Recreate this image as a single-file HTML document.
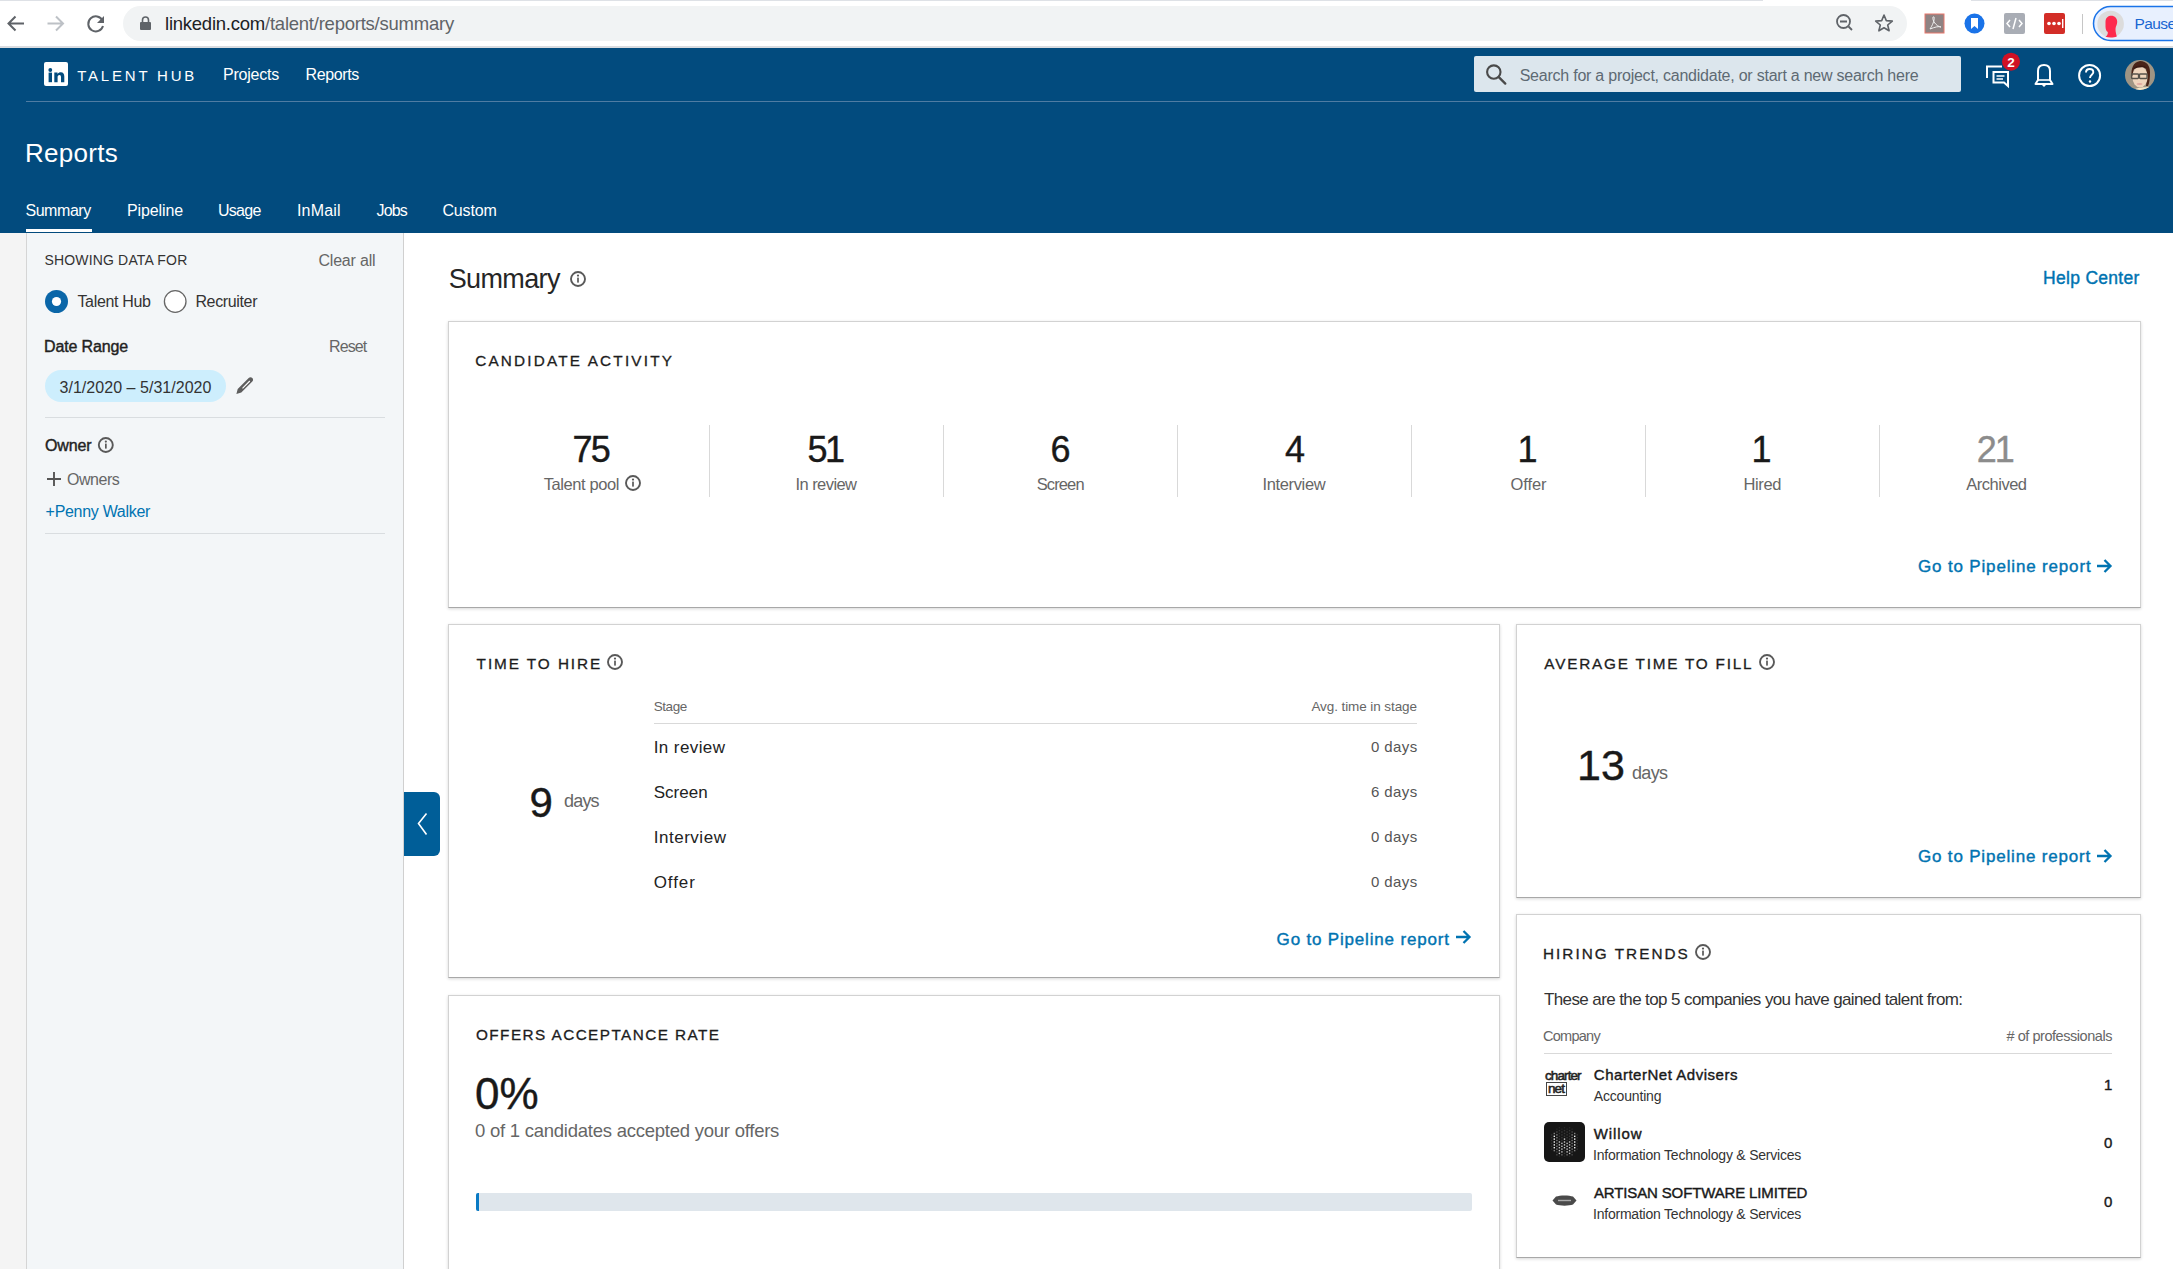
<!DOCTYPE html>
<html><head><meta charset="utf-8">
<style>
*{box-sizing:border-box;margin:0;padding:0}
html,body{width:2173px;height:1269px;overflow:hidden;background:#fff;font-family:"Liberation Sans",sans-serif}
.abs{position:absolute}
.tx{position:absolute;white-space:nowrap;line-height:1;font-family:"Liberation Sans",sans-serif}
.card{position:absolute;background:#fff;border:1px solid #d2d2d2;border-bottom-color:#a8a8a8;box-shadow:0 1px 3px rgba(0,0,0,.16)}
</style></head><body>
<!-- chrome bar -->
<div class="abs" style="left:0;top:0;width:2173px;height:47px;background:#fff"></div>
<div class="abs" style="left:0;top:0;width:1763px;height:1px;background:#dee1e6"></div>
<div class="abs" style="left:1971px;top:0;width:202px;height:1px;background:#dee1e6"></div>
<div class="abs" style="left:0;top:46px;width:2173px;height:2px;background:#dadce0"></div>
<div class="abs" style="left:123px;top:6px;width:1784px;height:35px;border-radius:18px;background:#f1f3f4"></div>
<svg class="abs" style="left:0;top:0" width="200" height="47">
  <path d="M24 23.5H9M15.5 16.5L8.5 23.5L15.5 30.5" stroke="#5f6368" stroke-width="2" fill="none"/>
  <path d="M47.5 23.5H62.5M56 16.5L63 23.5L56 30.5" stroke="#bdc1c6" stroke-width="2" fill="none"/>
  <path d="M102.5 20.5A7.5 7.5 0 1 0 103 26" stroke="#5f6368" stroke-width="2" fill="none"/>
  <path d="M104 16V23H97Z" fill="#5f6368"/>
  <rect x="140" y="22" width="11" height="8" rx="1" fill="#5f6368"/>
  <path d="M142.5 22V20A3 3 0 0 1 148.5 20V22" stroke="#5f6368" stroke-width="1.6" fill="none"/>
</svg>
<svg class="abs" style="left:1820px;top:0" width="353" height="47">
  <circle cx="23.5" cy="21.5" r="6.5" stroke="#5f6368" stroke-width="1.8" fill="none"/>
  <path d="M20 21.5H27M28.5 26.5L32 30" stroke="#5f6368" stroke-width="1.8" fill="none"/>
  <path d="M64 15L66.3 20.6L72.3 21.1L67.7 25L69.1 30.8L64 27.7L58.9 30.8L60.3 25L55.7 21.1L61.7 20.6Z" stroke="#5f6368" stroke-width="1.6" fill="none" stroke-linejoin="round"/>
  <rect x="105" y="14" width="19" height="19" fill="#8e8383" stroke="#e8776b" stroke-width="1"/>
  <path d="M110 29C112 26 115 20 114 17C113 16 112 18 114 22C116 25 119 27 121 27C119 26 115 27 110 29Z" stroke="#eee" stroke-width="1" fill="none"/>
  <circle cx="154.5" cy="23.5" r="10" fill="#1a73e8"/>
  <path d="M151 18H158V29L154.5 26L151 29Z" fill="#fff"/>
  <rect x="184" y="13" width="21" height="21" rx="2" fill="#a9adb5"/>
  <path d="M190 20L187 23.5L190 27M199 20L202 23.5L199 27M196 18L193 29" stroke="#fff" stroke-width="1.5" fill="none"/>
  <rect x="224" y="13" width="21" height="21" rx="2" fill="#d32d27"/>
  <circle cx="229" cy="23.5" r="1.8" fill="#fff"/><circle cx="234" cy="23.5" r="1.8" fill="#fff"/><circle cx="239" cy="23.5" r="1.8" fill="#fff"/>
  <rect x="242" y="19" width="1.4" height="9" fill="#fff"/>
  <rect x="262" y="14" width="1" height="20" fill="#c6c6c6"/>
  <rect x="273.5" y="6.5" width="140" height="34" rx="17" fill="#e8f0fe" stroke="#1a73e8" stroke-width="1.5"/>
  <circle cx="290.6" cy="24" r="13.3" fill="#dcdcdc"/>
  <path d="M285.5 22C285.5 17.5 288.5 15.8 291.2 15.8C294.8 15.8 297.3 18.5 297.2 22C297.1 24.5 296 26 295.6 28C295.3 30 295.8 33 296.8 36.5C294 37.8 289 38 285.5 36.8C287.5 35.5 288 33.5 287.8 32C286.3 31.3 285.5 29 285.5 26.5Z" fill="#fe2a4d"/>
</svg>

<!-- header -->
<div class="abs" style="left:0;top:48px;width:2173px;height:185px;background:#024b7e"></div>
<div class="abs" style="left:26px;top:101px;width:2147px;height:1px;background:#4f7ca3"></div>
<div class="abs" style="left:44px;top:62px;width:24px;height:24px;border-radius:2px;background:#fff"></div>
<svg class="abs" style="left:44px;top:62px" width="24" height="24">
  <circle cx="6.3" cy="8" r="1.9" fill="#024b7e"/>
  <rect x="4.6" y="10.6" width="3.4" height="9.6" fill="#024b7e"/>
  <path d="M10.3 10.6H13.5V12C14.2 10.9 15.4 10.3 16.9 10.3C19.3 10.3 20.3 11.9 20.3 14.6V20.2H17V15.2C17 13.8 16.5 13.1 15.4 13.1C14.2 13.1 13.6 14 13.6 15.4V20.2H10.3Z" fill="#024b7e"/>
</svg>
<div class="abs" style="left:1474px;top:56px;width:487px;height:36px;border-radius:2px;background:#dce6ed"></div>
<svg class="abs" style="left:1480px;top:58px" width="32" height="32">
  <circle cx="13.8" cy="14.1" r="6.7" stroke="#4a4a4a" stroke-width="2.1" fill="none"/>
  <path d="M18.8 19.1L25.3 25.6" stroke="#4a4a4a" stroke-width="2.3" stroke-linecap="round"/>
</svg>
<svg class="abs" style="left:1980px;top:50px" width="190" height="45">
  <!-- messages -->
  <path d="M7 28V16.5H22" stroke="#fff" stroke-width="2" fill="none"/>
  <path d="M13.5 22H28V36L24 32.5H13.5Z" stroke="#fff" stroke-width="2" fill="none" stroke-linejoin="miter"/>
  <path d="M16.5 26H24.5M16.5 29H23" stroke="#fff" stroke-width="1.3"/>
  <circle cx="31" cy="11.7" r="9" fill="#d11124"/>
  <text x="31" y="16.8" text-anchor="middle" font-family="Liberation Sans" font-weight="700" font-size="13.5" fill="#fff">2</text>
  <!-- bell -->
  <path d="M55.5 34H72.5L70 30V21C70 17 67.5 15 64 15C60.5 15 58 17 58 21V30Z" stroke="#fff" stroke-width="2" fill="none" stroke-linejoin="round"/>
  <path d="M58 30H70" stroke="#fff" stroke-width="1.6"/>
  <path d="M62 35H66L64 37Z" fill="#fff"/>
  <!-- help -->
  <circle cx="109.6" cy="25.5" r="10.5" stroke="#fff" stroke-width="2" fill="none"/>
  <path d="M106 22.5C106 20.3 107.7 19 109.7 19C111.7 19 113.3 20.3 113.3 22.2C113.3 24.6 110 25 110 28" stroke="#fff" stroke-width="1.9" fill="none"/>
  <circle cx="110" cy="31.5" r="1.2" fill="#fff"/>
  <!-- avatar -->
  <defs><clipPath id="av"><circle cx="160" cy="25" r="15"/></clipPath></defs>
  <g clip-path="url(#av)">
    <rect x="144" y="9" width="32" height="32" fill="#9f9584"/>
    <path d="M151.5 26C151 19 153 12 160 11C167 11 170 16 170 22C170 28 169.5 33 168 36L166 36C167 30 167.5 24 166 19C162 16 157 16 154 19C153 21 153 24 152.8 26Z" fill="#4a2418"/>
    <ellipse cx="160" cy="27" rx="7.6" ry="10.5" fill="#eed5bd"/>
    <path d="M153.5 18C156 15 164 14.5 167 18C164 16.8 157 16.8 153.5 19.5Z" fill="#3a1a12"/>
    <rect x="151.5" y="24" width="7" height="4.5" rx="0.8" fill="none" stroke="#55524a" stroke-width="1.3"/>
    <rect x="159.5" y="24" width="7.5" height="4.5" rx="0.8" fill="none" stroke="#55524a" stroke-width="1.3"/>
    <ellipse cx="159.5" cy="34" rx="3" ry="1" fill="#e0a9a0"/>
    <path d="M145 35C148 36 151 38 152 41H144Z" fill="#111"/>
    <path d="M152 41C154 38 164 37 170 37L172 41Z" fill="#f4e6c6"/>
  </g>
</svg>

<!-- body -->
<div class="abs" style="left:0;top:233px;width:26px;height:1036px;background:#f4f4f4"></div>
<div class="abs" style="left:26px;top:233px;width:378px;height:1036px;background:#f3f6f8;border-left:1px solid #d5d5d5;border-right:1px solid #d0d0d0"></div>
<!-- active tab underline -->
<div class="abs" style="left:26px;top:229px;width:66px;height:3px;background:#fff"></div>

<!-- sidebar widgets -->
<svg class="abs" style="left:40px;top:285px" width="160" height="32">
  <circle cx="16.5" cy="16.5" r="11.5" fill="#0a66a8"/>
  <circle cx="16.5" cy="16.5" r="4.6" fill="#fff"/>
  <circle cx="135.2" cy="16.5" r="10.8" fill="#fff" stroke="#666" stroke-width="1.3"/>
</svg>
<div class="abs" style="left:45px;top:370px;width:181px;height:32px;border-radius:16px;background:#cdeefd"></div>
<svg class="abs" style="left:232px;top:375px" width="24" height="24">
  <path d="M4.4 19L5.7 14L16.7 3C17.7 2 19.3 2 20.3 3C21.3 4 21.3 5.6 20.3 6.6L9.3 17.6Z" fill="#5e5e5e"/>
  <path d="M10.5 13.3L17.8 6" stroke="#fff" stroke-width="1.1"/>
</svg>
<div class="abs" style="left:45px;top:417px;width:340px;height:1px;background:#d9dde0"></div>
<svg class="abs" style="left:96px;top:436px" width="20" height="20">
  <circle cx="9.8" cy="9" r="7" stroke="#595959" stroke-width="1.9" fill="none"/>
  <rect x="9" y="7.6" width="1.7" height="5" fill="#595959"/><circle cx="9.85" cy="5.6" r="1.1" fill="#595959"/>
</svg>
<svg class="abs" style="left:44px;top:470px" width="20" height="20">
  <path d="M3 9H17M10 2V16" stroke="#555" stroke-width="1.9"/>
</svg>
<div class="abs" style="left:45px;top:533px;width:340px;height:1px;background:#d9dde0"></div>

<!-- collapse tab -->
<div class="abs" style="left:404px;top:792px;width:36px;height:64px;background:#005e98;border-radius:0 6px 6px 0"></div>
<svg class="abs" style="left:404px;top:792px" width="36" height="63">
  <path d="M22.5 21.5L14.5 31.5L22.5 42.5" stroke="#fff" stroke-width="1.6" fill="none"/>
</svg>

<!-- main info icon -->
<svg class="abs" style="left:568px;top:270px" width="20" height="20">
  <circle cx="10" cy="9" r="7" stroke="#595959" stroke-width="1.9" fill="none"/>
  <rect x="9.15" y="7.6" width="1.7" height="5" fill="#595959"/><circle cx="10" cy="5.6" r="1.1" fill="#595959"/>
</svg>

<!-- cards -->
<div class="card" style="left:448px;top:321px;width:1693px;height:287px"></div>
<div class="card" style="left:448px;top:624px;width:1052px;height:354px"></div>
<div class="card" style="left:1516px;top:624px;width:625px;height:274px"></div>
<div class="card" style="left:1516px;top:914px;width:625px;height:344px"></div>
<div class="card" style="left:448px;top:995px;width:1052px;height:400px"></div>

<!-- candidate activity dividers -->
<div class="abs" style="left:709px;top:425px;width:1px;height:72px;background:#d9d9d9"></div>
<div class="abs" style="left:943px;top:425px;width:1px;height:72px;background:#d9d9d9"></div>
<div class="abs" style="left:1177px;top:425px;width:1px;height:72px;background:#d9d9d9"></div>
<div class="abs" style="left:1411px;top:425px;width:1px;height:72px;background:#d9d9d9"></div>
<div class="abs" style="left:1645px;top:425px;width:1px;height:72px;background:#d9d9d9"></div>
<div class="abs" style="left:1879px;top:425px;width:1px;height:72px;background:#d9d9d9"></div>

<!-- info icons in cards -->
<svg class="abs" style="left:623px;top:473px" width="20" height="20">
  <circle cx="10" cy="10" r="7" stroke="#595959" stroke-width="1.9" fill="none"/>
  <rect x="9.15" y="8.6" width="1.7" height="5" fill="#595959"/><circle cx="10" cy="6.6" r="1.1" fill="#595959"/>
</svg>
<svg class="abs" style="left:605px;top:652px" width="20" height="20">
  <circle cx="10" cy="10" r="7" stroke="#595959" stroke-width="1.9" fill="none"/>
  <rect x="9.15" y="8.6" width="1.7" height="5" fill="#595959"/><circle cx="10" cy="6.6" r="1.1" fill="#595959"/>
</svg>
<svg class="abs" style="left:1757px;top:652px" width="20" height="20">
  <circle cx="10" cy="10" r="7" stroke="#595959" stroke-width="1.9" fill="none"/>
  <rect x="9.15" y="8.6" width="1.7" height="5" fill="#595959"/><circle cx="10" cy="6.6" r="1.1" fill="#595959"/>
</svg>
<svg class="abs" style="left:1693px;top:942px" width="20" height="20">
  <circle cx="10" cy="10" r="7" stroke="#595959" stroke-width="1.9" fill="none"/>
  <rect x="9.15" y="8.6" width="1.7" height="5" fill="#595959"/><circle cx="10" cy="6.6" r="1.1" fill="#595959"/>
</svg>

<!-- arrows for pipeline links -->
<svg class="abs" style="left:2094px;top:556px" width="20" height="20">
  <path d="M3 10H16M10.5 4L16.5 10L10.5 16" stroke="#0073b1" stroke-width="2.3" fill="none"/>
</svg>
<svg class="abs" style="left:1453px;top:927px" width="20" height="20">
  <path d="M3 10H16M10.5 4L16.5 10L10.5 16" stroke="#0073b1" stroke-width="2.3" fill="none"/>
</svg>
<svg class="abs" style="left:2094px;top:846px" width="20" height="20">
  <path d="M3 10H16M10.5 4L16.5 10L10.5 16" stroke="#0073b1" stroke-width="2.3" fill="none"/>
</svg>

<!-- time to hire table line -->
<div class="abs" style="left:654px;top:723px;width:763px;height:1px;background:#d9d9d9"></div>
<!-- hiring trends line -->
<div class="abs" style="left:1544px;top:1053px;width:568px;height:1px;background:#d9d9d9"></div>

<!-- company logos -->
<div class="tx" style="left:1545px;top:1069px;font-size:13.5px;letter-spacing:-0.9px;color:#222;-webkit-text-stroke:0.55px #222">charter</div>
<div class="abs" style="left:1546px;top:1082px;width:21px;height:14px;border:1px solid #444"></div>
<div class="tx" style="left:1548px;top:1082px;font-size:13.5px;letter-spacing:-0.9px;color:#222;-webkit-text-stroke:0.55px #222">net</div>
<div class="abs" style="left:1544px;top:1122px;width:41px;height:40px;border-radius:5px;background:#161616"></div>
<svg class="abs" style="left:1544px;top:1122px" width="41" height="40"><rect x="7.0" y="12.2" width="1.4" height="1.4" fill="#fff" opacity="0.12"/><rect x="7.0" y="15.0" width="1.4" height="1.4" fill="#fff" opacity="0.12"/><rect x="7.0" y="17.8" width="1.4" height="1.4" fill="#fff" opacity="0.12"/><rect x="7.0" y="20.7" width="1.4" height="1.4" fill="#fff" opacity="0.12"/><rect x="7.0" y="23.6" width="1.4" height="1.4" fill="#fff" opacity="0.12"/><rect x="7.0" y="26.4" width="1.4" height="1.4" fill="#fff" opacity="0.12"/><rect x="9.6" y="10.8" width="1.4" height="1.4" fill="#fff" opacity="0.47"/><rect x="9.6" y="13.6" width="1.4" height="1.4" fill="#fff" opacity="0.95"/><rect x="9.6" y="16.4" width="1.4" height="1.4" fill="#fff" opacity="0.95"/><rect x="9.6" y="19.3" width="1.4" height="1.4" fill="#fff" opacity="0.95"/><rect x="9.6" y="22.2" width="1.4" height="1.4" fill="#fff" opacity="0.95"/><rect x="9.6" y="25.0" width="1.4" height="1.4" fill="#fff" opacity="0.95"/><rect x="9.6" y="27.9" width="1.4" height="1.4" fill="#fff" opacity="0.47"/><rect x="12.2" y="6.5" width="1.4" height="1.4" fill="#fff" opacity="0.07"/><rect x="12.2" y="9.3" width="1.4" height="1.4" fill="#fff" opacity="0.23"/><rect x="12.2" y="12.2" width="1.4" height="1.4" fill="#fff" opacity="0.45"/><rect x="12.2" y="15.0" width="1.4" height="1.4" fill="#fff" opacity="0.45"/><rect x="12.2" y="17.8" width="1.4" height="1.4" fill="#fff" opacity="0.45"/><rect x="12.2" y="20.7" width="1.4" height="1.4" fill="#fff" opacity="0.45"/><rect x="12.2" y="23.6" width="1.4" height="1.4" fill="#fff" opacity="0.45"/><rect x="12.2" y="26.4" width="1.4" height="1.4" fill="#fff" opacity="0.45"/><rect x="12.2" y="29.2" width="1.4" height="1.4" fill="#fff" opacity="0.23"/><rect x="12.2" y="32.1" width="1.4" height="1.4" fill="#fff" opacity="0.23"/><rect x="14.7" y="5.0" width="1.4" height="1.4" fill="#fff" opacity="0.07"/><rect x="14.7" y="7.9" width="1.4" height="1.4" fill="#fff" opacity="0.15"/><rect x="14.7" y="10.8" width="1.4" height="1.4" fill="#fff" opacity="0.15"/><rect x="14.7" y="13.6" width="1.4" height="1.4" fill="#fff" opacity="0.15"/><rect x="14.7" y="16.4" width="1.4" height="1.4" fill="#fff" opacity="0.15"/><rect x="14.7" y="19.3" width="1.4" height="1.4" fill="#fff" opacity="0.75"/><rect x="14.7" y="22.2" width="1.4" height="1.4" fill="#fff" opacity="0.75"/><rect x="14.7" y="25.0" width="1.4" height="1.4" fill="#fff" opacity="0.75"/><rect x="14.7" y="27.9" width="1.4" height="1.4" fill="#fff" opacity="0.75"/><rect x="14.7" y="30.7" width="1.4" height="1.4" fill="#fff" opacity="0.75"/><rect x="14.7" y="33.5" width="1.4" height="1.4" fill="#fff" opacity="0.07"/><rect x="17.2" y="6.5" width="1.4" height="1.4" fill="#fff" opacity="0.07"/><rect x="17.2" y="9.3" width="1.4" height="1.4" fill="#fff" opacity="0.15"/><rect x="17.2" y="12.2" width="1.4" height="1.4" fill="#fff" opacity="0.15"/><rect x="17.2" y="15.0" width="1.4" height="1.4" fill="#fff" opacity="0.15"/><rect x="17.2" y="17.8" width="1.4" height="1.4" fill="#fff" opacity="0.15"/><rect x="17.2" y="20.7" width="1.4" height="1.4" fill="#fff" opacity="0.75"/><rect x="17.2" y="23.6" width="1.4" height="1.4" fill="#fff" opacity="0.75"/><rect x="17.2" y="26.4" width="1.4" height="1.4" fill="#fff" opacity="0.75"/><rect x="17.2" y="29.2" width="1.4" height="1.4" fill="#fff" opacity="0.75"/><rect x="17.2" y="32.1" width="1.4" height="1.4" fill="#fff" opacity="0.38"/><rect x="19.8" y="5.0" width="1.4" height="1.4" fill="#fff" opacity="0.07"/><rect x="19.8" y="7.9" width="1.4" height="1.4" fill="#fff" opacity="0.15"/><rect x="19.8" y="10.8" width="1.4" height="1.4" fill="#fff" opacity="0.15"/><rect x="19.8" y="13.6" width="1.4" height="1.4" fill="#fff" opacity="0.15"/><rect x="19.8" y="16.4" width="1.4" height="1.4" fill="#fff" opacity="0.80"/><rect x="19.8" y="19.3" width="1.4" height="1.4" fill="#fff" opacity="0.80"/><rect x="19.8" y="22.2" width="1.4" height="1.4" fill="#fff" opacity="0.80"/><rect x="19.8" y="25.0" width="1.4" height="1.4" fill="#fff" opacity="0.80"/><rect x="19.8" y="27.9" width="1.4" height="1.4" fill="#fff" opacity="0.15"/><rect x="19.8" y="30.7" width="1.4" height="1.4" fill="#fff" opacity="0.15"/><rect x="19.8" y="33.5" width="1.4" height="1.4" fill="#fff" opacity="0.07"/><rect x="22.4" y="6.5" width="1.4" height="1.4" fill="#fff" opacity="0.07"/><rect x="22.4" y="9.3" width="1.4" height="1.4" fill="#fff" opacity="0.15"/><rect x="22.4" y="12.2" width="1.4" height="1.4" fill="#fff" opacity="0.15"/><rect x="22.4" y="15.0" width="1.4" height="1.4" fill="#fff" opacity="0.15"/><rect x="22.4" y="17.8" width="1.4" height="1.4" fill="#fff" opacity="0.15"/><rect x="22.4" y="20.7" width="1.4" height="1.4" fill="#fff" opacity="0.75"/><rect x="22.4" y="23.6" width="1.4" height="1.4" fill="#fff" opacity="0.75"/><rect x="22.4" y="26.4" width="1.4" height="1.4" fill="#fff" opacity="0.75"/><rect x="22.4" y="29.2" width="1.4" height="1.4" fill="#fff" opacity="0.75"/><rect x="22.4" y="32.1" width="1.4" height="1.4" fill="#fff" opacity="0.38"/><rect x="24.9" y="5.0" width="1.4" height="1.4" fill="#fff" opacity="0.07"/><rect x="24.9" y="7.9" width="1.4" height="1.4" fill="#fff" opacity="0.15"/><rect x="24.9" y="10.8" width="1.4" height="1.4" fill="#fff" opacity="0.15"/><rect x="24.9" y="13.6" width="1.4" height="1.4" fill="#fff" opacity="0.15"/><rect x="24.9" y="16.4" width="1.4" height="1.4" fill="#fff" opacity="0.15"/><rect x="24.9" y="19.3" width="1.4" height="1.4" fill="#fff" opacity="0.75"/><rect x="24.9" y="22.2" width="1.4" height="1.4" fill="#fff" opacity="0.75"/><rect x="24.9" y="25.0" width="1.4" height="1.4" fill="#fff" opacity="0.75"/><rect x="24.9" y="27.9" width="1.4" height="1.4" fill="#fff" opacity="0.75"/><rect x="24.9" y="30.7" width="1.4" height="1.4" fill="#fff" opacity="0.75"/><rect x="24.9" y="33.5" width="1.4" height="1.4" fill="#fff" opacity="0.07"/><rect x="27.4" y="6.5" width="1.4" height="1.4" fill="#fff" opacity="0.07"/><rect x="27.4" y="9.3" width="1.4" height="1.4" fill="#fff" opacity="0.23"/><rect x="27.4" y="12.2" width="1.4" height="1.4" fill="#fff" opacity="0.45"/><rect x="27.4" y="15.0" width="1.4" height="1.4" fill="#fff" opacity="0.45"/><rect x="27.4" y="17.8" width="1.4" height="1.4" fill="#fff" opacity="0.45"/><rect x="27.4" y="20.7" width="1.4" height="1.4" fill="#fff" opacity="0.45"/><rect x="27.4" y="23.6" width="1.4" height="1.4" fill="#fff" opacity="0.45"/><rect x="27.4" y="26.4" width="1.4" height="1.4" fill="#fff" opacity="0.45"/><rect x="27.4" y="29.2" width="1.4" height="1.4" fill="#fff" opacity="0.23"/><rect x="27.4" y="32.1" width="1.4" height="1.4" fill="#fff" opacity="0.23"/><rect x="30.0" y="10.8" width="1.4" height="1.4" fill="#fff" opacity="0.47"/><rect x="30.0" y="13.6" width="1.4" height="1.4" fill="#fff" opacity="0.95"/><rect x="30.0" y="16.4" width="1.4" height="1.4" fill="#fff" opacity="0.95"/><rect x="30.0" y="19.3" width="1.4" height="1.4" fill="#fff" opacity="0.95"/><rect x="30.0" y="22.2" width="1.4" height="1.4" fill="#fff" opacity="0.95"/><rect x="30.0" y="25.0" width="1.4" height="1.4" fill="#fff" opacity="0.95"/><rect x="30.0" y="27.9" width="1.4" height="1.4" fill="#fff" opacity="0.47"/><rect x="32.5" y="12.2" width="1.4" height="1.4" fill="#fff" opacity="0.12"/><rect x="32.5" y="15.0" width="1.4" height="1.4" fill="#fff" opacity="0.12"/><rect x="32.5" y="17.8" width="1.4" height="1.4" fill="#fff" opacity="0.12"/><rect x="32.5" y="20.7" width="1.4" height="1.4" fill="#fff" opacity="0.12"/><rect x="32.5" y="23.6" width="1.4" height="1.4" fill="#fff" opacity="0.12"/><rect x="32.5" y="26.4" width="1.4" height="1.4" fill="#fff" opacity="0.12"/></svg>
<svg class="abs" style="left:1550px;top:1192px" width="29" height="17">
  <path d="M2.5 8.5L6 4.5C10 3 19 3 23 4.5L26.5 8.5L23 12.5C19 14 10 14 6 12.5Z" fill="#4a4a4a"/>
  <rect x="8" y="7.8" width="13" height="1.4" fill="#aaa"/>
</svg>

<!-- progress bar -->
<div class="abs" style="left:476px;top:1193px;width:996px;height:18px;border-radius:2px;background:#dfe6ec"></div>
<div class="abs" style="left:476px;top:1193px;width:3px;height:18px;border-radius:2px 0 0 2px;background:#0a7ac4"></div>

<span id="t0" class="tx" style="top:14.46px;font-size:18.5px;color:#5f6368;letter-spacing:-0.235px;left:165.00px;top:15px;"><span style="color:#202124">linkedin.com</span>/talent/reports/summary</span>
<span id="t1" class="tx" style="top:16.08px;font-size:15.5px;color:#1967d2;letter-spacing:-0.600px;left:2134.50px;top:16px;">Pause</span>
<span id="t2" class="tx" style="top:68.00px;font-size:15px;color:#fff;letter-spacing:2.800px;left:77.20px;top:68px;">TALENT HUB</span>
<span id="t3" class="tx" style="top:66.56px;font-size:16px;color:#fff;letter-spacing:-0.214px;left:223.00px;top:67px;">Projects</span>
<span id="t4" class="tx" style="top:66.56px;font-size:16px;color:#fff;letter-spacing:-0.383px;left:305.60px;top:67px;">Reports</span>
<span id="t5" class="tx" style="top:67.16px;font-size:16px;color:#5e6a73;letter-spacing:-0.236px;left:1519.70px;top:68px;">Search for a project, candidate, or start a new search here</span>
<span id="t6" class="tx" style="top:139.96px;font-size:26px;color:#fff;letter-spacing:0.267px;left:25.00px;top:140px;">Reports</span>
<span id="t7" class="tx" style="top:202.56px;font-size:16px;color:#fff;letter-spacing:-0.433px;left:25.40px;top:203px;">Summary</span>
<span id="t8" class="tx" style="top:202.56px;font-size:16px;color:#fff;letter-spacing:-0.114px;left:127.00px;top:203px;">Pipeline</span>
<span id="t9" class="tx" style="top:202.56px;font-size:16px;color:#fff;letter-spacing:-0.725px;left:218.00px;top:203px;">Usage</span>
<span id="t10" class="tx" style="top:202.56px;font-size:16px;color:#fff;letter-spacing:0.160px;left:297.00px;top:203px;">InMail</span>
<span id="t11" class="tx" style="top:202.56px;font-size:16px;color:#fff;letter-spacing:-0.867px;left:376.60px;top:203px;">Jobs</span>
<span id="t12" class="tx" style="top:202.56px;font-size:16px;color:#fff;letter-spacing:-0.120px;left:442.40px;top:203px;">Custom</span>
<span id="t13" class="tx" style="top:253.54px;font-size:14px;color:#333;letter-spacing:0.173px;left:44.40px;top:253px;">SHOWING DATA FOR</span>
<span id="t14" class="tx" style="top:252.56px;font-size:16px;color:#666;letter-spacing:-0.175px;left:318.40px;top:253px;">Clear all</span>
<span id="t15" class="tx" style="top:293.46px;font-size:16px;color:#333;letter-spacing:-0.322px;left:77.40px;top:294px;">Talent Hub</span>
<span id="t16" class="tx" style="top:293.46px;font-size:16px;color:#333;letter-spacing:-0.350px;left:195.40px;top:294px;">Recruiter</span>
<span id="t17" class="tx" style="top:338.86px;font-size:16px;color:#222;-webkit-text-stroke:0.4px currentColor;letter-spacing:-0.133px;left:44.00px;top:339px;">Date Range</span>
<span id="t18" class="tx" style="top:338.86px;font-size:16px;color:#666;letter-spacing:-0.875px;left:329.00px;top:339px;">Reset</span>
<span id="t19" class="tx" style="top:379.86px;font-size:16px;color:#333;letter-spacing:0.037px;left:59.50px;top:380px;">3/1/2020 – 5/31/2020</span>
<span id="t20" class="tx" style="top:437.56px;font-size:16px;color:#222;-webkit-text-stroke:0.4px currentColor;letter-spacing:-0.125px;left:45.00px;top:438px;">Owner</span>
<span id="t21" class="tx" style="top:471.66px;font-size:16px;color:#666;letter-spacing:-0.460px;left:67.00px;top:472px;">Owners</span>
<span id="t22" class="tx" style="top:503.16px;font-size:16px;color:#0073b1;letter-spacing:-0.300px;left:45.60px;top:504px;">+Penny Walker</span>
<span id="t23" class="tx" style="top:265.22px;font-size:27px;color:#262626;letter-spacing:-0.633px;left:448.70px;top:266px;">Summary</span>
<span id="t24" class="tx" style="top:269.10px;font-size:17.5px;color:#0073b1;-webkit-text-stroke:0.4px currentColor;letter-spacing:0.290px;left:2043.10px;top:270px;">Help Center</span>
<span id="t25" class="tx" style="top:353.45px;font-size:15.3px;color:#1d1d1d;-webkit-text-stroke:0.3px currentColor;letter-spacing:2.188px;left:475.20px;top:353px;">CANDIDATE ACTIVITY</span>
<span id="t26" class="tx" style="top:431.96px;font-size:36px;color:#191919;-webkit-text-stroke:0.4px currentColor;letter-spacing:-1.800px;left:572.50px;top:432px;">75</span>
<span id="t27" class="tx" style="top:476.34px;font-size:16.5px;color:#666;letter-spacing:-0.410px;left:543.70px;top:476px;">Talent pool</span>
<span id="t28" class="tx" style="top:431.96px;font-size:36px;color:#191919;-webkit-text-stroke:0.4px currentColor;letter-spacing:-2.500px;left:807.55px;top:432px;">51</span>
<span id="t29" class="tx" style="top:476.34px;font-size:16.5px;color:#666;letter-spacing:-0.562px;left:795.50px;top:476px;">In review</span>
<span id="t30" class="tx" style="top:431.96px;font-size:36px;color:#191919;-webkit-text-stroke:0.4px currentColor;left:1050.50px;top:432px;">6</span>
<span id="t31" class="tx" style="top:476.34px;font-size:16.5px;color:#666;letter-spacing:-0.880px;left:1036.70px;top:476px;">Screen</span>
<span id="t32" class="tx" style="top:431.96px;font-size:36px;color:#191919;-webkit-text-stroke:0.4px currentColor;left:1285.00px;top:432px;">4</span>
<span id="t33" class="tx" style="top:476.34px;font-size:16.5px;color:#666;letter-spacing:-0.375px;left:1262.60px;top:476px;">Interview</span>
<span id="t34" class="tx" style="top:431.96px;font-size:36px;color:#191919;-webkit-text-stroke:0.4px currentColor;left:1517.50px;top:432px;">1</span>
<span id="t35" class="tx" style="top:476.34px;font-size:16.5px;color:#666;letter-spacing:-0.075px;left:1510.45px;top:476px;">Offer</span>
<span id="t36" class="tx" style="top:431.96px;font-size:36px;color:#191919;-webkit-text-stroke:0.4px currentColor;left:1751.50px;top:432px;">1</span>
<span id="t37" class="tx" style="top:476.34px;font-size:16.5px;color:#666;letter-spacing:-0.350px;left:1743.40px;top:476px;">Hired</span>
<span id="t38" class="tx" style="top:431.96px;font-size:36px;color:#8c8c8c;-webkit-text-stroke:0.4px currentColor;letter-spacing:-2.000px;left:1976.80px;top:432px;">21</span>
<span id="t39" class="tx" style="top:476.34px;font-size:16.5px;color:#666;letter-spacing:-0.471px;left:1966.15px;top:476px;">Archived</span>
<span id="t40" class="tx" style="top:558.02px;font-size:17px;color:#0073b1;-webkit-text-stroke:0.4px currentColor;letter-spacing:0.835px;left:1918.00px;top:558px;">Go to Pipeline report</span>
<span id="t41" class="tx" style="top:656.65px;font-size:15.3px;color:#1d1d1d;-webkit-text-stroke:0.3px currentColor;letter-spacing:1.945px;left:476.60px;top:656px;">TIME TO HIRE</span>
<span id="t42" class="tx" style="top:699.86px;font-size:13.5px;color:#666;letter-spacing:-0.425px;left:653.70px;top:700px;">Stage</span>
<span id="t43" class="tx" style="top:699.86px;font-size:13.5px;color:#666;letter-spacing:-0.082px;left:1311.40px;top:700px;">Avg. time in stage</span>
<span id="t44" class="tx" style="top:738.72px;font-size:17px;color:#222;letter-spacing:0.412px;left:653.70px;top:739px;">In review</span>
<span id="t45" class="tx" style="top:783.72px;font-size:17px;color:#222;letter-spacing:0.040px;left:653.70px;top:784px;">Screen</span>
<span id="t46" class="tx" style="top:828.72px;font-size:17px;color:#222;letter-spacing:0.525px;left:653.70px;top:829px;">Interview</span>
<span id="t47" class="tx" style="top:873.72px;font-size:17px;color:#222;letter-spacing:0.925px;left:653.70px;top:874px;">Offer</span>
<span id="t48" class="tx" style="top:739.40px;font-size:15px;color:#555;letter-spacing:0.400px;left:1371.00px;top:739px;">0 days</span>
<span id="t49" class="tx" style="top:784.40px;font-size:15px;color:#555;letter-spacing:0.400px;left:1371.00px;top:784px;">6 days</span>
<span id="t50" class="tx" style="top:829.40px;font-size:15px;color:#555;letter-spacing:0.400px;left:1371.00px;top:829px;">0 days</span>
<span id="t51" class="tx" style="top:874.40px;font-size:15px;color:#555;letter-spacing:0.400px;left:1371.00px;top:874px;">0 days</span>
<span id="t52" class="tx" style="top:782.12px;font-size:42px;color:#191919;-webkit-text-stroke:0.4px currentColor;left:529.40px;top:782px;">9</span>
<span id="t53" class="tx" style="top:791.58px;font-size:18px;color:#666;letter-spacing:-0.800px;left:564.00px;top:792px;">days</span>
<span id="t54" class="tx" style="top:930.72px;font-size:17px;color:#0073b1;-webkit-text-stroke:0.4px currentColor;letter-spacing:0.820px;left:1276.60px;top:931px;">Go to Pipeline report</span>
<span id="t55" class="tx" style="top:656.15px;font-size:15.3px;color:#1d1d1d;-webkit-text-stroke:0.3px currentColor;letter-spacing:1.800px;left:1544.30px;top:656px;">AVERAGE TIME TO FILL</span>
<span id="t56" class="tx" style="top:743.38px;font-size:43px;color:#191919;-webkit-text-stroke:0.4px currentColor;left:1577.00px;top:744px;">13</span>
<span id="t57" class="tx" style="top:763.48px;font-size:18px;color:#666;letter-spacing:-0.667px;left:1632.00px;top:764px;">days</span>
<span id="t58" class="tx" style="top:848.22px;font-size:17px;color:#0073b1;-webkit-text-stroke:0.4px currentColor;letter-spacing:0.815px;left:1918.00px;top:848px;">Go to Pipeline report</span>
<span id="t59" class="tx" style="top:945.95px;font-size:15.3px;color:#1d1d1d;-webkit-text-stroke:0.3px currentColor;letter-spacing:2.033px;left:1543.00px;top:946px;">HIRING TRENDS</span>
<span id="t60" class="tx" style="top:990.42px;font-size:17px;color:#333;letter-spacing:-0.607px;left:1544.00px;top:991px;">These are the top 5 companies you have gained talent from:</span>
<span id="t61" class="tx" style="top:1028.62px;font-size:14.5px;color:#666;letter-spacing:-0.733px;left:1543.00px;top:1029px;">Company</span>
<span id="t62" class="tx" style="top:1028.62px;font-size:14.5px;color:#666;letter-spacing:-0.453px;left:2006.50px;top:1029px;"># of professionals</span>
<span id="t63" class="tx" style="top:1067.40px;font-size:15px;color:#191919;-webkit-text-stroke:0.4px currentColor;letter-spacing:0.522px;left:1593.80px;top:1067px;">CharterNet Advisers</span>
<span id="t64" class="tx" style="top:1089.24px;font-size:14px;color:#333;letter-spacing:-0.178px;left:1593.80px;top:1089px;">Accounting</span>
<span id="t65" class="tx" style="top:1126.40px;font-size:15px;color:#191919;-webkit-text-stroke:0.4px currentColor;letter-spacing:0.880px;left:1593.80px;top:1126px;">Willow</span>
<span id="t66" class="tx" style="top:1147.94px;font-size:14px;color:#333;letter-spacing:-0.219px;left:1593.00px;top:1148px;">Information Technology &amp; Services</span>
<span id="t67" class="tx" style="top:1185.40px;font-size:15px;color:#191919;-webkit-text-stroke:0.4px currentColor;letter-spacing:-0.143px;left:1594.00px;top:1185px;">ARTISAN SOFTWARE LIMITED</span>
<span id="t68" class="tx" style="top:1207.04px;font-size:14px;color:#333;letter-spacing:-0.219px;left:1593.00px;top:1207px;">Information Technology &amp; Services</span>
<span id="t69" class="tx" style="top:1077.00px;font-size:15px;color:#191919;-webkit-text-stroke:0.4px currentColor;left:2104.00px;top:1077px;">1</span>
<span id="t70" class="tx" style="top:1135.60px;font-size:15px;color:#191919;-webkit-text-stroke:0.4px currentColor;left:2104.00px;top:1135px;">0</span>
<span id="t71" class="tx" style="top:1194.20px;font-size:15px;color:#191919;-webkit-text-stroke:0.4px currentColor;left:2104.00px;top:1194px;">0</span>
<span id="t72" class="tx" style="top:1027.45px;font-size:15.3px;color:#1d1d1d;-webkit-text-stroke:0.3px currentColor;letter-spacing:1.438px;left:476.00px;top:1027px;">OFFERS ACCEPTANCE RATE</span>
<span id="t73" class="tx" style="top:1071.74px;font-size:44px;color:#191919;-webkit-text-stroke:0.4px currentColor;left:475.00px;top:1072px;">0%</span>
<span id="t74" class="tx" style="top:1121.76px;font-size:18.5px;color:#666;letter-spacing:-0.243px;left:475.00px;top:1122px;">0 of 1 candidates accepted your offers</span>
</body></html>
